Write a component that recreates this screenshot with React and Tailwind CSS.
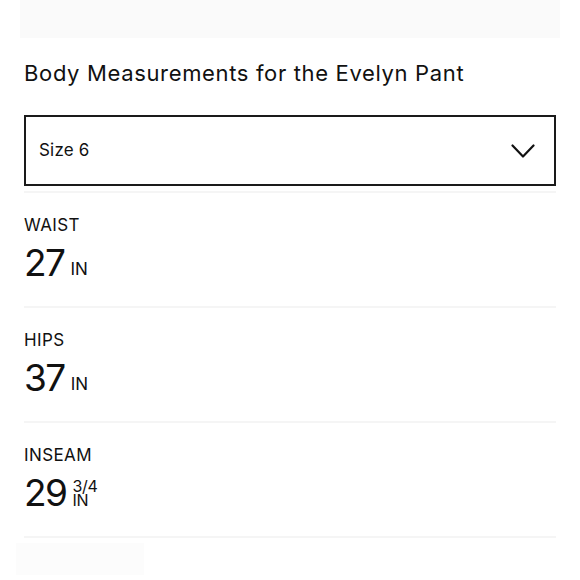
const measurements = [
    { label: "WAIST", value: "27" },
    { label: "HIPS", value: "37" },
    { label: "INSEAM", value: "29", fraction: "3/4" },
];

export default function App() {
    return (
        <div className="w-[580px] h-[580px] bg-white overflow-hidden text-[#111]" style={{ fontFamily: "Inter, 'Noto Sans', sans-serif" }}>
            {/* faint top bar */}
            <div className="h-[38px] bg-[#fafafa] mx-[20px]" />

            <div className="px-6">
                <h2 className="mt-[20px] text-[22px] leading-[30px] tracking-[0.65px]">Body Measurements for the Evelyn Pant</h2>

                <button className="mt-[27px] w-full h-[71px] border-2 border-[#1a1a1a] flex items-center justify-between pl-[13px] pr-[19px]">
                    <span className="text-[17px] tracking-[0.2px]">Size 6</span>
                    <svg width="24" height="14" viewBox="0 0 24 14" fill="none" stroke="#111" strokeWidth="2.2" strokeLinecap="round" strokeLinejoin="round">
                        <polyline points="1.5,1.5 12,12.5 22.5,1.5" />
                    </svg>
                </button>
                <div className="h-[2px] bg-[#f5f5f5] mt-[5px]" />

                {measurements.map((m) => (
                    <div key={m.label}>
                        <div className="pt-[22px] h-[113px]">
                            <div className="text-[17px] leading-[20px] tracking-[0.4px]">{m.label}</div>
                            <div className="flex items-start mt-[8px]">
                                <span className="text-[37px] leading-[40px] tracking-[-1.5px]">{m.value}</span>
                                {m.fraction ? (
                                    <span className="ml-[6px] mt-[6px] flex flex-col text-[16px] leading-[14px] tracking-[-0.3px]">
                                        <span>{m.fraction}</span>
                                        <span>IN</span>
                                    </span>
                                ) : (
                                    <span className="ml-[6px] mt-[16px] text-[17px] leading-[20px]">IN</span>
                                )}
                            </div>
                        </div>
                        <div className="h-[2px] bg-[#f5f5f5]" />
                    </div>
                ))}
            </div>

            {/* faint bottom block */}
            <div className="mt-[5px] ml-[16px] w-[128px] h-[32px] bg-[#fcfcfc]" />
        </div>
    );
}
